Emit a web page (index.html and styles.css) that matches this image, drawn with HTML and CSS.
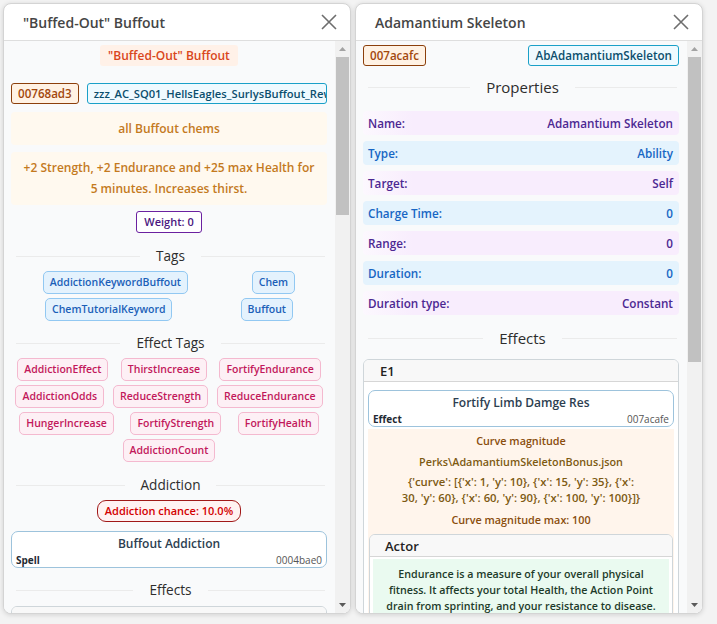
FILE: index.html
```html
<!DOCTYPE html>
<html lang="en">
<head>
<meta charset="utf-8">
<title>Records</title>
<link rel="stylesheet" href="styles.css">
</head>
<body>
<div class="desk">

  <section class="win">
    <header class="win-head">
      <h1 class="win-title">"Buffed-Out" Buffout</h1>
      <span class="close"><svg width="16" height="16" viewBox="0 0 16 16"><path d="M1 1 L15 15 M15 1 L1 15" stroke="#6e6e6e" stroke-width="1.6" fill="none"/></svg></span>
    </header>
    <div class="win-body">
      <div class="content">
        <div class="center"><span class="full-name">"Buffed-Out" Buffout</span></div>
        <div class="id-row">
          <span class="badge form-id">00768ad3</span>
          <span class="badge editor-id editor-id--wide">zzz_AC_SQ01_HellsEagles_SurlysBuffout_Reward</span>
        </div>
        <div class="note note--short">all Buffout chems</div>
        <div class="note note--desc">+2 Strength, +2 Endurance and +25 max Health for 5 minutes. Increases thirst.</div>
        <div class="center"><span class="weight">Weight: 0</span></div>

        <h2 class="section">Tags</h2>
        <div class="chips">
          <span class="chip chip--kw">AddictionKeywordBuffout</span>
          <span class="chip chip--kw">Chem</span>
          <span class="chip chip--kw">ChemTutorialKeyword</span>
          <span class="chip chip--kw">Buffout</span>
        </div>

        <h2 class="section">Effect Tags</h2>
        <div class="chips">
          <span class="chip chip--fx">AddictionEffect</span>
          <span class="chip chip--fx">ThirstIncrease</span>
          <span class="chip chip--fx">FortifyEndurance</span>
          <span class="chip chip--fx">AddictionOdds</span>
          <span class="chip chip--fx">ReduceStrength</span>
          <span class="chip chip--fx">ReduceEndurance</span>
          <span class="chip chip--fx">HungerIncrease</span>
          <span class="chip chip--fx">FortifyStrength</span>
          <span class="chip chip--fx">FortifyHealth</span>
          <span class="chip chip--fx">AddictionCount</span>
        </div>

        <h2 class="section section--spaced">Addiction</h2>
        <div class="center"><span class="chance">Addiction chance: 10.0%</span></div>
        <div class="ref-card ref-card--spell">
          <div class="ref-title">Buffout Addiction</div>
          <div class="ref-meta"><span class="ref-type">Spell</span><span class="ref-id">0004bae0</span></div>
        </div>

        <h2 class="section section--tight">Effects</h2>
        <div class="effect-box">
          <div class="effect-head">E1</div>
        </div>
      </div>
      <div class="vscroll">
        <span class="arrow"><svg width="7" height="4" viewBox="0 0 7 4"><path d="M0 4 L3.5 0 L7 4 Z" fill="#a3a3a3"/></svg></span>
        <span class="track"><span class="thumb" style="height:158px"></span></span>
        <span class="arrow"><svg width="7" height="4" viewBox="0 0 7 4"><path d="M0 0 L3.5 4 L7 0 Z" fill="#5a5a5a"/></svg></span>
      </div>
    </div>
  </section>

  <section class="win">
    <header class="win-head">
      <h1 class="win-title">Adamantium Skeleton</h1>
      <span class="close"><svg width="16" height="16" viewBox="0 0 16 16"><path d="M1 1 L15 15 M15 1 L1 15" stroke="#6e6e6e" stroke-width="1.6" fill="none"/></svg></span>
    </header>
    <div class="win-body">
      <div class="content">
        <div class="id-row id-row--split">
          <span class="badge form-id">007acafc</span>
          <span class="badge editor-id">AbAdamantiumSkeleton</span>
        </div>

        <h2 class="section section--big">Properties</h2>
        <div class="props">
          <div class="prop prop--violet"><span>Name:</span><span>Adamantium Skeleton</span></div>
          <div class="prop prop--blue"><span>Type:</span><span>Ability</span></div>
          <div class="prop prop--violet"><span>Target:</span><span>Self</span></div>
          <div class="prop prop--blue"><span>Charge Time:</span><span>0</span></div>
          <div class="prop prop--violet"><span>Range:</span><span>0</span></div>
          <div class="prop prop--blue"><span>Duration:</span><span>0</span></div>
          <div class="prop prop--violet"><span>Duration type:</span><span>Constant</span></div>
        </div>

        <h2 class="section section--big section--after-props">Effects</h2>
        <div class="effect-box">
          <div class="effect-head">E1</div>
          <div class="effect-body">
            <div class="ref-card">
              <div class="ref-title">Fortify Limb Damge Res</div>
              <div class="ref-meta"><span class="ref-type">Effect</span><span class="ref-id">007acafe</span></div>
            </div>
            <div class="curve">
              <div class="curve-line">Curve magnitude</div>
              <div class="curve-line curve-file">Perks\AdamantiumSkeletonBonus.json</div>
              <div class="curve-json">{'curve': [{'x': 1, 'y': 10}, {'x': 15, 'y': 35}, {'x':<br>30, 'y': 60}, {'x': 60, 'y': 90}, {'x': 100, 'y': 100}]}</div>
              <div class="curve-line">Curve magnitude max: 100</div>
              <div class="actor">
                <div class="actor-head">Actor</div>
                <div class="actor-body">Endurance is a measure of your overall physical fitness. It affects your total Health, the Action Point drain from sprinting, and your resistance to disease.</div>
              </div>
            </div>
          </div>
        </div>
      </div>
      <div class="vscroll">
        <span class="arrow"><svg width="7" height="4" viewBox="0 0 7 4"><path d="M0 4 L3.5 0 L7 4 Z" fill="#a3a3a3"/></svg></span>
        <span class="track"><span class="thumb" style="height:305px"></span></span>
        <span class="arrow"><svg width="7" height="4" viewBox="0 0 7 4"><path d="M0 0 L3.5 4 L7 0 Z" fill="#5a5a5a"/></svg></span>
      </div>
    </div>
  </section>

</div>
</body>
</html>
```

FILE: styles.css
```css
* { box-sizing: border-box; }

html, body {
  margin: 0;
  padding: 0;
}

body {
  background: #f3f3f3;
  font-family: "Open Sans", "Noto Sans", sans-serif;
  color: #222;
  width: 717px;
  height: 624px;
  overflow: hidden;
}

.desk {
  display: flex;
  gap: 4px;
  padding: 3px;
}

.win {
  width: 348px;
  height: 611px;
  background: #fff;
  border: 1px solid #d4d4d4;
  border-radius: 8px;
  box-shadow: 0 1px 5px rgba(0, 0, 0, 0.14);
  display: flex;
  flex-direction: column;
  overflow: hidden;
}

.win-head {
  height: 37px;
  flex: none;
  display: flex;
  align-items: center;
  justify-content: space-between;
  padding: 0 13px 0 19px;
  border-bottom: 1px solid #dedede;
}

.win-title {
  margin: 0;
  font-size: 14px;
  font-weight: 600;
  color: #454545;
}

.close {
  display: flex;
  width: 16px;
  height: 16px;
}

.win-body {
  flex: 1;
  min-height: 0;
  display: flex;
  background: #f9fafb;
}

.content {
  flex: 1;
  min-width: 0;
  overflow: hidden;
  padding: 4px 8px 0 7px;
  font-size: 12px;
  font-weight: 600;
}

/* fake native scrollbar */
.vscroll {
  width: 15px;
  flex: none;
  display: flex;
  flex-direction: column;
  background: #f1f1f1;
}

.arrow {
  height: 16px;
  flex: none;
  display: flex;
  align-items: center;
  justify-content: center;
}

.track {
  flex: 1;
  display: flex;
  flex-direction: column;
  padding: 0 1px;
}

.thumb {
  display: block;
  background: #c1c1c1;
}

.center {
  display: flex;
  justify-content: center;
}

.full-name {
  font-size: 12px;
  line-height: 21px;
  padding: 0 8px;
  color: #d9461b;
  background: #fff1e8;
  border-radius: 3px;
}

.id-row {
  display: flex;
  gap: 8px;
  margin-top: 17px;
}

.id-row--split {
  justify-content: space-between;
  margin-top: 0;
}

.badge {
  height: 21px;
  line-height: 19px;
  padding: 0 6px;
  font-size: 11.6px;
  border: 1px solid;
  border-radius: 3px;
  white-space: nowrap;
  overflow: hidden;
}

.form-id {
  color: #a2470c;
  background: #fff2e4;
  border-color: #8c3f0b;
  flex: none;
}

.editor-id {
  color: #0b4e6d;
  background: #effaff;
  border-color: #1aa0c8;
}

.editor-id--wide {
  flex: 1;
  min-width: 0;
  font-size: 11.2px;
}

.note {
  text-align: center;
  color: #c47a1e;
  background: #fff9ef;
  border-radius: 4px;
}

.note--short {
  margin-top: 8px;
  padding: 7px 8px;
  line-height: 19px;
}

.note--desc {
  margin-top: 7px;
  padding: 6px 9px;
  line-height: 20.5px;
}

.weight {
  margin-top: 6px;
  margin-bottom: 3px;
  height: 22px;
  line-height: 20px;
  padding: 0 7px;
  font-size: 11px;
  color: #4b1780;
  background: #fff;
  border: 1px solid #6b21a0;
  border-radius: 3px;
}

.section {
  display: flex;
  align-items: center;
  gap: 16px;
  margin: 10px 0 3px;
  padding: 0 2px 0 5px;
  font-size: 13.6px;
  font-weight: 500;
  line-height: 20px;
  color: #2d2d2d;
}

.section::before,
.section::after {
  content: "";
  flex: 1;
  height: 1px;
  background: #ebebeb;
}

.section--spaced {
  margin: 11px 0 5px;
}

.section--tight {
  margin: 12px 0 6px;
}

.section--big {
  font-size: 15px;
  line-height: 22px;
  margin: 10px 0 13px;
}

.section--after-props {
  margin: 12px 0 10px;
}

.chips {
  display: flex;
  flex-wrap: wrap;
  justify-content: space-around;
}

.chip {
  margin: 2px;
  height: 23px;
  line-height: 21px;
  padding: 0 6px;
  font-size: 10.5px;
  border: 1px solid;
  border-radius: 5px;
  white-space: nowrap;
}

.chip--kw {
  color: #1b5fb8;
  background: #e4f2fd;
  border-color: #92c8f2;
}

.chip--fx {
  color: #c2185b;
  background: #fdf0f5;
  border-color: #f4b9cf;
}

.chance {
  height: 22px;
  line-height: 20px;
  padding: 0 7px;
  font-size: 11px;
  color: #d30000;
  background: #fff2f2;
  border: 1px solid #a01818;
  border-radius: 9px;
}

.ref-card {
  margin-top: 9px;
  height: 37px;
  padding: 3px 4px 2px;
  background: #fff;
  border: 1px solid #9dc3dc;
  border-radius: 7px;
}

.ref-title {
  text-align: center;
  font-size: 12px;
  line-height: 18px;
  color: #2c3e50;
}

.ref-meta {
  display: flex;
  justify-content: space-between;
  font-size: 10px;
  line-height: 14px;
}

.ref-type {
  color: #1f2a33;
  font-weight: 700;
}

.ref-id {
  color: #555;
  font-weight: 400;
}

.effect-box {
  background: #fff;
  border: 1px solid #cfd6da;
  border-radius: 6px;
  overflow: hidden;
}

.effect-head {
  height: 22px;
  line-height: 22px;
  padding-left: 16px;
  font-size: 13px;
  color: #222;
  background: #f8f8f8;
  border-bottom: 1px solid #d6d6d6;
}

.effect-body {
  padding: 8px 4px 0;
}

.effect-body .ref-card {
  margin-top: 0;
}

.curve {
  margin-top: 2px;
  padding: 1px 1px 0;
  text-align: center;
  font-size: 10.8px;
  color: #8a4d0c;
  background: #fff5ec;
}

.curve-line {
  line-height: 21px;
}

.curve-file {
  color: #7d5a12;
}

.curve-json {
  font-size: 11.3px;
  line-height: 16px;
  padding: 2px 4px 3px;
  color: #7d5a12;
}

.actor {
  margin-top: 4px;
  background: #fff;
  border: 1px solid #cfd6da;
  border-radius: 6px 6px 0 0;
  overflow: hidden;
}

.actor-head {
  height: 22px;
  line-height: 22px;
  padding-left: 15px;
  font-size: 13px;
  text-align: left;
  color: #222;
  background: #f8f8f8;
  border-bottom: 1px solid #d6d6d6;
}

.actor-body {
  margin: 2px 3px 0;
  padding: 7px 8px 6px;
  font-size: 10.7px;
  line-height: 16px;
  color: #1d3b2a;
  background: #eafaf0;
}

.props {
  display: flex;
  flex-direction: column;
  gap: 6px;
}

.prop {
  display: flex;
  justify-content: space-between;
  height: 24px;
  line-height: 24px;
  padding: 0 6px 0 5px;
  font-size: 11.7px;
  border-radius: 4px;
}

.prop--violet {
  color: #4c2892;
  background: linear-gradient(90deg, #fcf8fe 0, #f8edfd 50px, #f8edfd);
}

.prop--blue {
  color: #1766c4;
  background: #e4f3fd;
}
```
